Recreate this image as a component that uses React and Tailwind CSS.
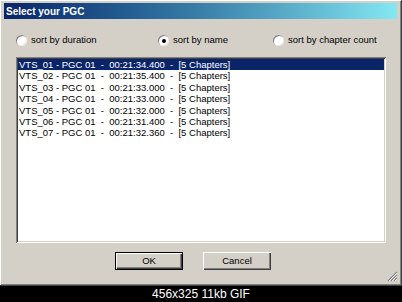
const rows = [
  "VTS_01 - PGC 01  -  00:21:34.400  -  [5 Chapters]",
  "VTS_02 - PGC 01  -  00:21:35.400  -  [5 Chapters]",
  "VTS_03 - PGC 01  -  00:21:33.000  -  [5 Chapters]",
  "VTS_04 - PGC 01  -  00:21:33.000  -  [5 Chapters]",
  "VTS_05 - PGC 01  -  00:21:32.000  -  [5 Chapters]",
  "VTS_06 - PGC 01  -  00:21:31.400  -  [5 Chapters]",
  "VTS_07 - PGC 01  -  00:21:32.360  -  [5 Chapters]",
];

function Radio({ label, checked, width }) {
  return (
    <div className={`flex items-center ${width}`}>
      <span className="w-[11px] h-[11px] rounded-full bg-white shadow-[inset_1px_1px_#808080,inset_-1px_-1px_#e8e6e0] flex items-center justify-center shrink-0">
        {checked && <span className="w-[4px] h-[4px] rounded-full bg-black" />}
      </span>
      <span className="ml-[4px]">{label}</span>
    </div>
  );
}

export default function App() {
  return (
    <div
      className="w-[402px] h-[302px] flex flex-col bg-black text-[9.5px] text-black"
      style={{ fontFamily: '"Liberation Sans", Arial, sans-serif' }}
    >
      {/* Dialog window */}
      <div className="relative h-[286px] bg-[#d4d0c8] flex flex-col shadow-[inset_-1px_-1px_#404040,inset_1px_1px_#ffffff,inset_-2px_-2px_#808080,inset_2px_2px_#d4d0c8]">

        {/* Title bar */}
        <div className="h-[16px] mt-[3px] ml-[4px] mr-[5px] flex items-center bg-gradient-to-r from-[#0a246a] via-[#3a7fa8] to-[#84e8f2]">
          <span className="pl-[2px] text-[10px] font-bold text-white">Select your PGC</span>
        </div>

        {/* Sort options */}
        <div className="flex items-center h-[11px] mt-[16px] pl-[16px]">
          <Radio label="sort by duration" width="w-[142px]" />
          <Radio label="sort by name" checked width="w-[115px]" />
          <Radio label="sort by chapter count" />
        </div>

        {/* List */}
        <div className="mt-[11px] ml-[16px] w-[370px] h-[186px] bg-white p-[2px] shadow-[inset_1px_1px_#808080,inset_-1px_-1px_#ffffff,inset_2px_2px_#404040,inset_-2px_-2px_#d4d0c8]">
          {rows.map((r, i) => (
            <div
              key={i}
              className={`h-[11.4px] leading-[11.4px] pl-[1px] whitespace-pre ${
                i === 0 ? "bg-[#0a246a] text-white" : ""
              }`}
            >
              {r}
            </div>
          ))}
        </div>

        {/* Buttons */}
        <div className="flex mt-[9px] ml-[115px] gap-[20px]">
          <button className="w-[68px] h-[18px] bg-[#d4d0c8] border border-black shadow-[inset_1px_1px_#ffffff,inset_-1px_-1px_#404040,inset_-2px_-2px_#808080] text-[9.5px]">
            OK
          </button>
          <button className="w-[68px] h-[18px] bg-[#d4d0c8] shadow-[inset_1px_1px_#ffffff,inset_-1px_-1px_#404040,inset_-2px_-2px_#808080] text-[9.5px]">
            Cancel
          </button>
        </div>

        {/* Resize grip */}
        <svg className="absolute right-[4px] bottom-[4px]" width="11" height="11" viewBox="0 0 11 11">
          <path d="M10 1 L1 10 M10 4 L4 10 M10 7 L7 10" stroke="#808080" strokeWidth="1.2" />
          <path d="M10 2 L2 10 M10 5 L5 10 M10 8 L8 10" stroke="#ffffff" strokeWidth="0.8" />
        </svg>
      </div>

      {/* Caption */}
      <div className="h-[16px] flex items-center justify-center text-white text-[12px]">
        456x325 11kb GIF
      </div>
    </div>
  );
}
